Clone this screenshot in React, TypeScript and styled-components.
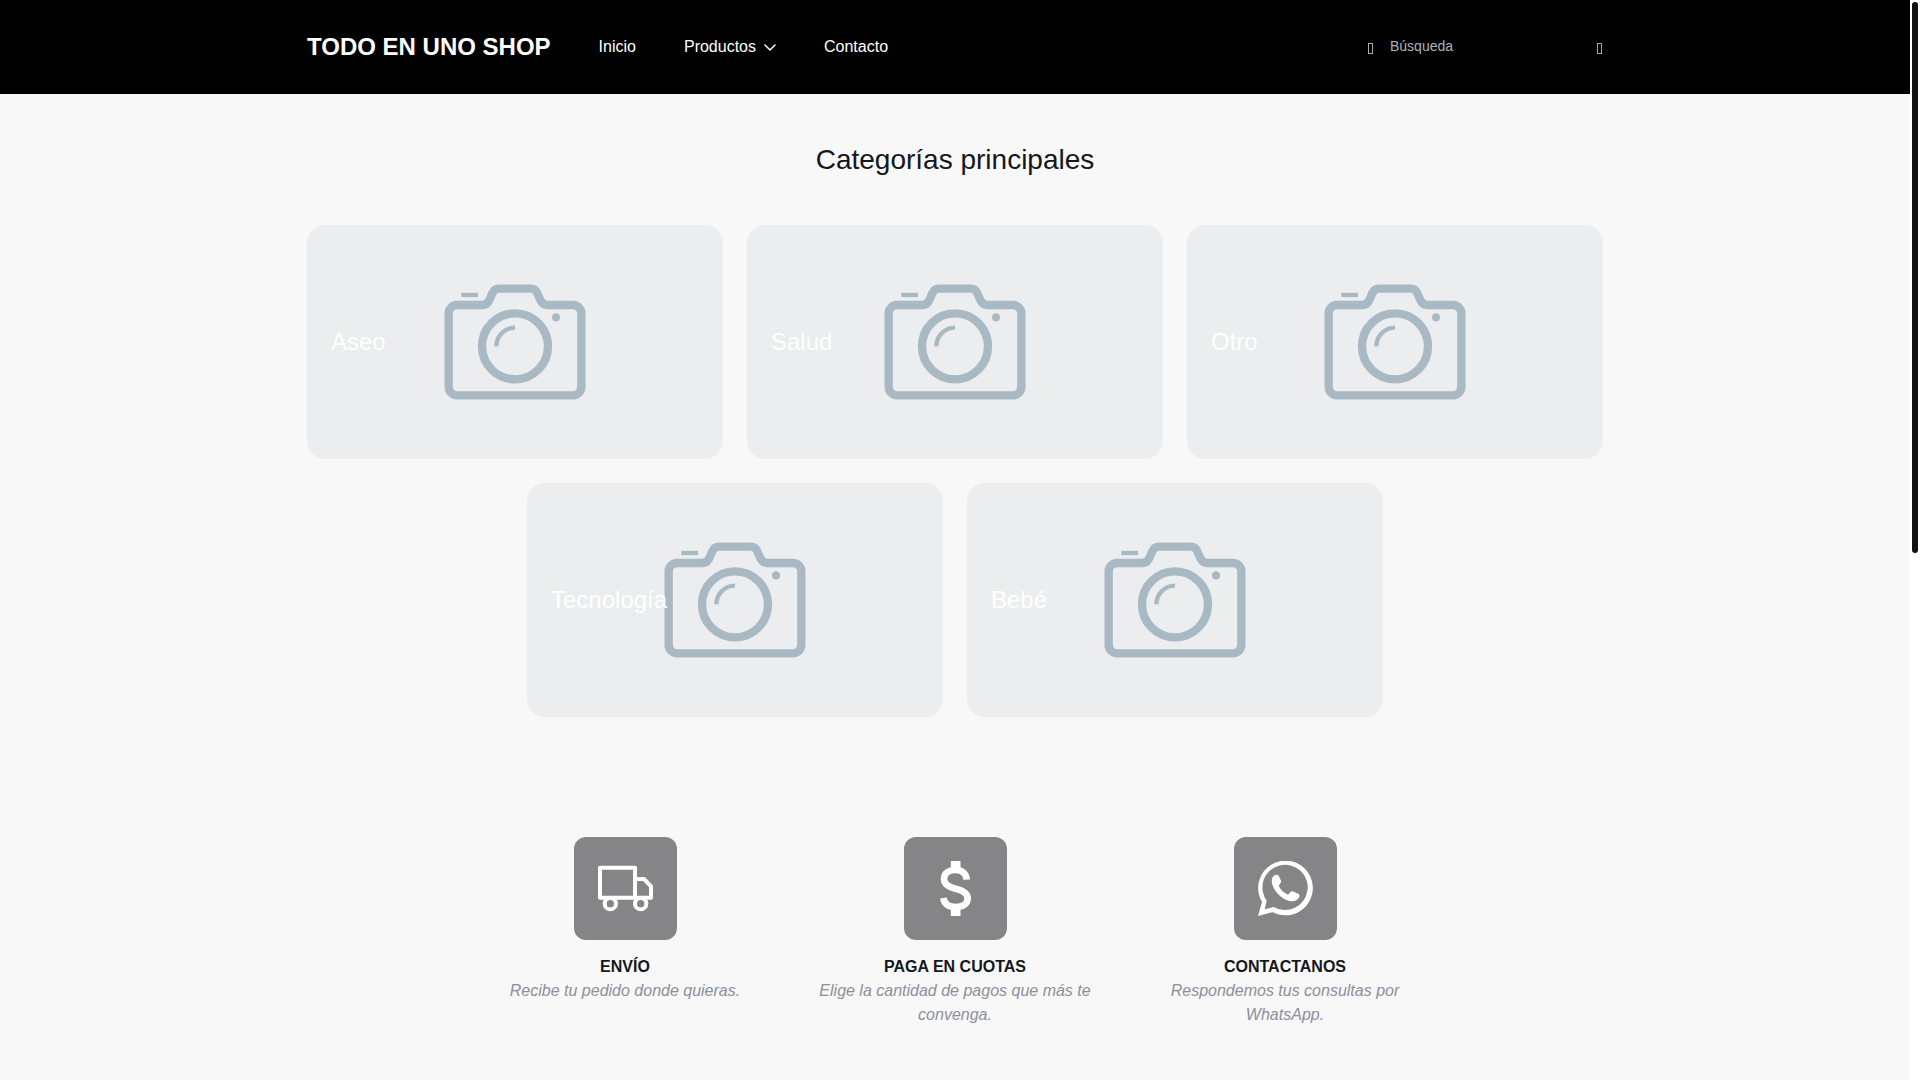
import React from "react";
import styled, { createGlobalStyle } from "styled-components";

const GlobalStyle = createGlobalStyle`
  *, *::before, *::after { box-sizing: border-box; }
  body {
    margin: 0;
    background: #ffffff;
    color: #14171c;
    font-family: "Liberation Sans", Arial, sans-serif;
    font-size: 16px;
    line-height: 24px;
  }
  h1, h2, h3, p, ul { margin: 0; padding: 0; }
  a { color: inherit; text-decoration: none; }
  button, input { font: inherit; color: inherit; background: none; border: 0; padding: 0; }
  button { cursor: pointer; }
`;

const Shell = styled.div`
  display: grid;
  grid-template-columns: minmax(0, 1fr) 10px;
  min-height: 100vh;
`;

const Page = styled.div`
  background: #f8f8f8;
`;

const ScrollTrack = styled.div`
  background: #ffffff;
  padding: 2px;
`;

const ScrollThumb = styled.div`
  height: 51vh;
  border-radius: 3px;
  background: #111111;
`;

const Container = styled.div<{ $max: number }>`
  width: 100%;
  max-width: ${(p) => p.$max}px;
  margin: 0 auto;
  padding: 0 12px;
`;

const Header = styled.header`
  background: #000000;
  color: #ffffff;
`;

const HeaderRow = styled(Container)`
  display: flex;
  align-items: center;
  gap: 48px;
  height: 94px;
`;

const Brand = styled.a`
  font-size: 24px;
  font-weight: 700;
  line-height: 36px;
`;

const Nav = styled.nav`
  display: flex;
  align-items: center;
  gap: 48px;
`;

const NavLink = styled.a`
  color: #ffffff;
`;

const NavButton = styled.button`
  display: flex;
  align-items: center;
  gap: 8px;
`;

const Search = styled.form`
  display: flex;
  align-items: center;
  gap: 16px;
  margin-left: auto;
  padding-right: 1px;
`;

const Glyph = styled.span`
  display: block;
  width: 5px;
  height: 11px;
  margin-top: 3px;
  border: 1px solid #a9a9a9;
`;

const SearchInput = styled.input`
  width: 191px;
  height: 24px;
  padding-bottom: 2px;
  font-size: 14px;
  outline: none;
  &::placeholder { color: #adb1bd; opacity: 1; }
`;

const SearchLabel = styled.label`
  display: flex;
  align-items: center;
  gap: 17px;
`;

const Title = styled.h2`
  padding: 48px 0;
  font-size: 28px;
  font-weight: 400;
  line-height: 35px;
  text-align: center;
`;

const Cards = styled.div`
  display: flex;
  flex-wrap: wrap;
  justify-content: center;
  gap: 24px;
`;

const Card = styled.a`
  display: grid;
  align-items: center;
  flex: 0 0 calc((100% - 48px) / 3);
  aspect-ratio: 16 / 9;
  border-radius: 18px;
  background: #ebedee;
  color: #ffffff;
  font-size: 24px;
  line-height: 36px;
  > * { grid-area: 1 / 1; }
`;

const CardPicture = styled.svg`
  justify-self: center;
  color: #a9b9c4;
`;

const CardName = styled.span`
  padding: 0 24px;
  z-index: 1;
`;

const Benefits = styled(Container)`
  display: grid;
  grid-template-columns: repeat(3, 1fr);
  padding: 120px 0 48px;
`;

const Benefit = styled.section`
  display: flex;
  flex-direction: column;
  align-items: center;
  padding: 0 12px;
  text-align: center;
`;

const Tile = styled.div`
  display: flex;
  margin-bottom: 15px;
  padding: 24px;
  border-radius: 12px;
  background: #858587;
  color: #ffffff;
`;

const BenefitTitle = styled.h3`
  font-size: 16px;
  font-weight: 700;
`;

const BenefitText = styled.p`
  color: #8b8f9d;
  font-style: italic;
`;

const Camera = () => (
  <CardPicture width="142" height="116" viewBox="432 221 426 348" fill="none" stroke="currentColor" strokeWidth="25" aria-hidden="true">
    <path d="M471 284H547Q560 284 567 271L577 249Q583 235 597 235H693Q706 235 712 249L722 271Q729 284 743 284H819A25 25 0 0 1 844 309V530A25 25 0 0 1 819 555H471A25 25 0 0 1 446 530V309A25 25 0 0 1 471 284Z" />
    <circle cx="645" cy="408" r="99" />
    <path d="M589 408A56 56 0 0 1 645 352" strokeWidth="13" />
    <path d="M484 254H534" strokeWidth="13" />
    <circle cx="768" cy="321" r="12.5" fill="currentColor" stroke="none" />
  </CardPicture>
);

const Truck = () => (
  <svg width="55" height="55" viewBox="0 0 165 165" fill="none" stroke="currentColor" strokeWidth="12" strokeLinejoin="round" aria-hidden="true">
    <rect x="6" y="20" width="105" height="90" />
    <path d="M111 54H138L159 76V110H111" />
    <circle cx="37" cy="128" r="17" fill="#858587" />
    <circle cx="128" cy="128" r="17" fill="#858587" />
  </svg>
);

const Dollar = () => (
  <svg width="55" height="55" viewBox="0 0 165 165" fill="none" stroke="currentColor" aria-hidden="true">
    <path d="M83 0V28M83 137V165" strokeWidth="29" />
    <path d="M116 56C115 37 102 27 83 27C62 27 48 37 48 54C48 71 63 78 83 83C104 88 119 96 119 112C119 129 104 138 83 138C62 138 49 129 46 111" strokeWidth="20" />
  </svg>
);

const WhatsApp = () => (
  <svg width="55" height="55" viewBox="0 0 165 165" fill="currentColor" aria-hidden="true">
    <path fillRule="evenodd" d="M0 165L12 123A82 82 0 1 1 44 153.500ZM20 145L47 138A68 68 0 1 0 26 119Z" />
    <path d="M46 46C51 41 59 40 62 44L69 59C70 65 66 68 62 74C67 85 77 95 90 101C95 97 98 90 104 91L122 99C127 102 124 110 119 115C112 121 102 122 92 119C69 112 50 92 43 71C40 61 41 51 46 46Z" />
  </svg>
);

const categories = ["Aseo", "Salud", "Otro", "Tecnología", "Bebé"];

const benefits = [
  { icon: <Truck />, title: "ENVÍO", text: "Recibe tu pedido donde quieras." },
  { icon: <Dollar />, title: "PAGA EN CUOTAS", text: "Elige la cantidad de pagos que más te convenga." },
  { icon: <WhatsApp />, title: "CONTACTANOS", text: "Respondemos tus consultas por WhatsApp." },
];

export default function App() {
  return (
    <Shell>
      <GlobalStyle />
      <Page>
        <Header>
          <HeaderRow $max={1320}>
            <Brand href="#">TODO EN UNO SHOP</Brand>
            <Nav>
              <NavLink href="#">Inicio</NavLink>
              <NavButton type="button">
                Productos
                <svg width="12" height="8" viewBox="0 0 12 8" fill="none" stroke="currentColor" strokeWidth="1.5" strokeLinecap="round" strokeLinejoin="round" aria-hidden="true">
                  <path d="M1 2L6 7L11 2" />
                </svg>
              </NavButton>
              <NavLink href="#">Contacto</NavLink>
            </Nav>
            <Search>
              <SearchLabel>
                <Glyph />
                <SearchInput type="text" placeholder="Búsqueda" aria-label="Búsqueda" />
              </SearchLabel>
              <button type="button" aria-label="Carrito">
                <Glyph />
              </button>
            </Search>
          </HeaderRow>
        </Header>
        <main>
          <Container $max={1320}>
            <Title>Categorías principales</Title>
            <Cards>
              {categories.map((name) => (
                <Card href="#" key={name}>
                  <Camera />
                  <CardName>{name}</CardName>
                </Card>
              ))}
            </Cards>
          </Container>
          <Benefits $max={990}>
            {benefits.map((b) => (
              <Benefit key={b.title}>
                <Tile>{b.icon}</Tile>
                <BenefitTitle>{b.title}</BenefitTitle>
                <BenefitText>{b.text}</BenefitText>
              </Benefit>
            ))}
          </Benefits>
        </main>
      </Page>
      <ScrollTrack>
        <ScrollThumb />
      </ScrollTrack>
    </Shell>
  );
}
